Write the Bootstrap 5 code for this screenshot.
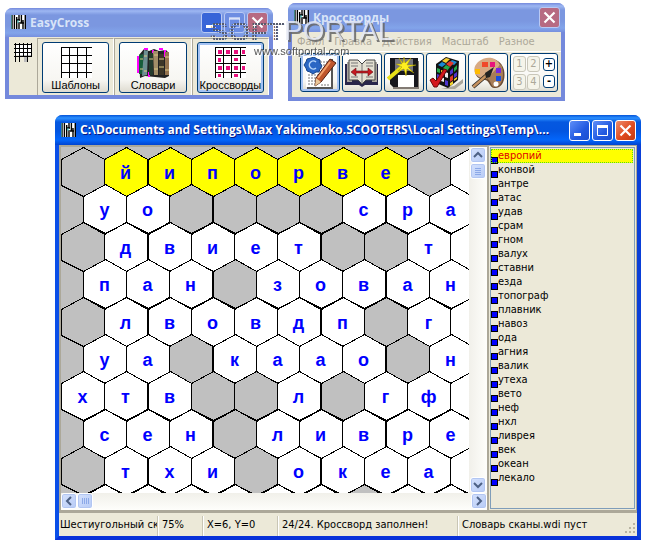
<!DOCTYPE html>
<html lang="ru">
<head>
<meta charset="utf-8">
<meta name="viewport" content="width=device-width, initial-scale=1">
<title>EasyCross</title>
<link href="https://cdn.jsdelivr.net/npm/bootstrap@5.3.0/dist/css/bootstrap.min.css" rel="stylesheet">
<style>
body{background:#fff;font:11px/14px "DejaVu Sans Condensed","DejaVu Sans",sans-serif;color:#000;min-height:100vh;overflow:hidden}
button{font:inherit;color:inherit;padding:0}
svg{display:block;flex:none}
.xp-window{position:absolute;background:#ece9d8;border:4px solid #7489dc;border-top:0;border-radius:8px 8px 0 0}
.win-easy{left:5px;top:8px;width:268px}
.win-tools{left:288px;top:3px;width:277px}
.win-main{left:55px;right:6px;top:115px;border-color:#0831d9;border-left-color:#0a4fe8;border-right-color:#0a3fd8}
.xp-title{height:29px;margin:0 -4px;padding:0 5px 0 6px;border-radius:7px 7px 0 0;color:#d8e4f8;font:bold 12px/18px "Open Sans","Noto Sans",sans-serif;background:linear-gradient(#7489dc 0,#9db7f2 3px,#7b97e0 7px,#7b97e0 18px,#82a4ea 25px,#768fde 100%)}
.win-main .xp-title{height:30px;color:#fff;text-shadow:1px 1px #0a1883;background:linear-gradient(#0453d8 0,#2b90ff 3px,#0558e0 7px,#0355e0 16px,#0366fb 25px,#0144d0 100%)}
.ctl-group{gap:2px}
.xp-ctl{width:21px;height:21px;border:1px solid #b9c9f4;border-radius:3px;background:#6d8de2}
.win-easy .xp-ctl.xp-min{background:#3764d8}
.win-main .xp-ctl{border-color:#fff;background:linear-gradient(135deg,#5f8ef8,#2159e0 60%,#1a4fd0)}
.xp-ctl.xp-close{background:#b76a82}
.win-main .xp-ctl.xp-close{background:linear-gradient(135deg,#ee8d6e,#e04b20 55%,#c23a12)}
.xp-btn{border:1px solid #003c74;border-radius:3px;background:linear-gradient(#fff,#f7f6f2 75%,#dedbd0)}
.xp-btn.is-default{box-shadow:inset 0 0 0 2px #a5c3f3}
.easy-body{padding-top:1px}
.easy-cell{flex:1 1 0;min-width:0;border-left:1px solid #aca899;border-top:1px solid #aca899;border-right:1px solid #fff;padding:3px 4px 2px}
.easy-cell .xp-btn{height:51px;overflow:hidden;font:11px/14px "Liberation Sans",sans-serif}
.menu-row{height:20px;padding:0 5px;gap:10px;color:#aca899;border-bottom:1px solid #fff}
.menu-row a{color:inherit;text-decoration:none}
.tool-row{padding:1px 3px 5px 8px;gap:2px}
.tool-row .tool{width:40px;height:39px;flex:none}
.zoom-pad{width:48px;height:39px;padding:0 2px;gap:2px}
.num-grid{grid-template-columns:14px 14px;row-gap:2px}
.pad-num{width:13px;height:16px;border:1px solid #c9c7ba;border-radius:3px;background:#f5f4ea;color:#aca899;line-height:13px}
.pad-sign{width:12px;height:13px;border:1px solid #003c74;border-radius:3px;background:#fff;font-weight:bold;line-height:10px}
.board-pane{border:1px solid #aca899;border-width:2px 1px 1px 2px;background:#ece9d8;min-width:0}
.board-view{height:346px;min-width:0;background:#c0c0c0;overflow:hidden}
.board-view text{font:bold 18px "Liberation Sans",sans-serif;fill:#00f;text-anchor:middle}
.track-v{width:18px;background:linear-gradient(90deg,#f1f0ea,#fefefb)}
.track-h{height:17px;background:linear-gradient(#f1f0ea,#fefefb)}
.sb{width:16px;height:16px;flex:none;border:1px solid #fff;border-radius:3px;background:linear-gradient(135deg,#d4e1fd,#b7cbf6);box-shadow:inset 0 0 0 1px #b2c6f2}
.word-pane{width:149px;border:1px solid #aca899}
.word-list{border:1px solid #7f9db9;padding:1px 1px 0 0;margin:1px}
.word-list li{height:14px;line-height:14px}
.word-list i{width:7px;height:7px;flex:none;border:1px solid #000;background:#00f;margin-bottom:-1px}
.word-list .picked{background:#ff0;color:#e00000;outline:1px dotted #5ce000;outline-offset:-1px}
.status{height:25px;padding-top:3px;border-top:2px solid #aca899;line-height:18px}
.status span{padding-left:4px;white-space:nowrap;overflow:hidden;border-right:1px solid #c9c6b5;box-shadow:1px 0 #fff}
.status .s1{width:99px;padding-left:1px}
.status .s2{width:45px}
.status .s3{width:75px}
.status .s4{width:180px}
.status .s5{border:0;box-shadow:none}
.stamp{position:absolute;left:204px;top:8px;pointer-events:none;font-family:"Liberation Sans",sans-serif}
.stamp .logo{filter:drop-shadow(2px 2px 0 #666)}
.stamp .site{filter:drop-shadow(1px 1px 0 #fff)}
</style>
<script src="https://cdn.jsdelivr.net/npm/bootstrap@5.3.0/dist/js/bootstrap.bundle.min.js"></script>
</head>
<body>
<svg width="0" height="0" class="position-absolute" aria-hidden="true">
<symbol id="app" viewBox="0 0 15 15"><path fill="#fff" d="M0 0h15v14H0z"/><path stroke="#000" stroke-width="1.4" d="M1 0v14M3.4 0v14M5.7 2v12M8 0v5M8 7v7M10.4 0v8M12 5v9M14.3 0v14M5 5h4M9 8h4"/><path stroke="#3bb" d="M0 0v14M7 5v3"/></symbol>
<symbol id="min" viewBox="0 0 19 19"><path fill="#fff" d="M4 12h7v3H4z"/></symbol>
<symbol id="max" viewBox="0 0 19 19"><path fill="none" stroke="currentColor" d="M4.500 5.500h10v9h-10z"/><path fill="currentColor" d="M4 4h11v3H4z"/></symbol>
<symbol id="cls" viewBox="0 0 19 19"><path stroke="#fff" stroke-width="2.200" d="M4.500 4.500l10 10M14.500 4.500l-10 10"/></symbol>
</svg>

<section class="xp-window win-easy">
<header class="xp-title d-flex align-items-center">
<svg width="15" height="15"><use href="#app"/></svg><span class="ms-1 flex-fill">EasyCross</span>
<div class="ctl-group d-flex text-white-50"><button class="xp-ctl xp-min" aria-label="Свернуть"><svg width="19" height="19"><use href="#min"/></svg></button><button class="xp-ctl" aria-label="Развернуть"><svg width="19" height="19"><use href="#max"/></svg></button><button class="xp-ctl xp-close" aria-label="Закрыть"><svg width="19" height="19"><use href="#cls"/></svg></button></div>
</header>
<div class="easy-body d-flex">
<svg class="ms-1 mt-1 me-1" width="20" height="20" viewBox="0 0 20 20" shape-rendering="crispEdges"><path d="M5 5h14v10h-4v5h-4v-5H7v5" fill="#bbb"/><path fill="#fff" d="M2 2h17v11H2z"/><path fill="none" stroke="#000" d="M1 2.500h18M1 6.500h18M1 10.500h18M1 14.500h18M2.500 1v19M6.500 1v19M10.500 1v14M14.500 1v19M18.500 1v13"/></svg>
<div class="easy-cell"><button class="xp-btn w-100 d-flex flex-column align-items-center"><svg class="mt-1" width="32" height="31" viewBox="0 0 32 31" shape-rendering="crispEdges"><path fill="#fff" d="M1 0h31v31H1z"/><path fill="none" stroke="#000" d="M1.500 0v31M9.500 0v31M17.500 0v31M26.500 0v31M1 .5h31M1 8.500h31M1 16.500h31M1 25.500h31"/></svg>Шаблоны</button></div>
<div class="easy-cell"><button class="xp-btn w-100 d-flex flex-column align-items-center"><svg class="mt-1" width="34" height="31" viewBox="0 0 34 31"><path fill="#222" d="M3 8l5-6 5 2 5-2 5 2 7-1 3 3v23l-4 2-20-2-5 2z"/><path fill="#f0f" d="M1 9h2v17H1zM8 1h4v2H8zM16 3h2v4h-2zM23 1h4v2h-4zM12 25h2v5h-2zM28 3h2v7h-2z"/><path fill="#175d3a" d="M3 8l4-1v20H3z"/><path fill="#6d8f92" d="M8 3l4 1-1 24-5 1z"/><path fill="#243b2d" d="M13 6h4v22h-4z"/><path fill="#a38e68" d="M17 4h5v24h-4z"/><path fill="#3d3627" d="M23 7h5v21h-5z"/><path fill="#94734e" d="M29 5h4v23h-4z"/><path stroke="#dbc985" d="M4 12h3M4 22h3M8 9h3M8 24h3M13 12h4M18 8h4M18 22h4M23 12h5M23 20h5M29 10h4M29 23h4"/></svg>Словари</button></div>
<div class="easy-cell"><button class="xp-btn is-default w-100 d-flex flex-column align-items-center"><svg class="mt-1" width="32" height="31" viewBox="0 0 32 31" shape-rendering="crispEdges"><path fill="#fff" d="M1 0h31v31H1z"/><path fill="none" stroke="#000" d="M1.500 0v31M9.500 0v31M17.500 0v31M26.500 0v31M1 .5h31M1 8.500h31M1 16.500h31M1 25.500h31"/><path fill="#e8107c" d="M4 3h4v4H4zM12 3h4v4h-4zM20 3h4v4h-4zM28 3h3v4h-3zM4 11h3v4H4zM20 11h4v3h-4zM4 19h4v4H4zM12 19h4v4h-4zM20 19h4v4h-4zM28 19h3v4h-3zM4 27h3v3H4zM20 27h4v3h-4z"/></svg>Кроссворды</button></div>
</div>
</section>

<section class="xp-window win-tools">
<header class="xp-title d-flex align-items-center">
<svg width="15" height="15"><use href="#app"/></svg><span class="ms-1 flex-fill">Кроссворды</span>
<button class="xp-ctl xp-close" aria-label="Закрыть"><svg width="19" height="19"><use href="#cls"/></svg></button>
</header>
<nav class="menu-row d-flex align-items-center"><a href="#">Файл</a><a href="#">Правка</a><a href="#">Действия</a><a href="#">Масштаб</a><a href="#">Разное</a></nav>
<div class="tool-row d-flex">
<button class="xp-btn is-default tool d-flex align-items-center justify-content-center" aria-label="Новый"><svg width="34" height="32" viewBox="0 0 34 32"><path fill="#555" d="M4 2h26v30H4z"/><path fill="#fff" d="M3 1h25v29H3z"/><path stroke="#777" stroke-dasharray="2 1" d="M17 5h9M17 8h6M17 11h4M5 18h12M5 21h8M5 24h7M5 27h9M18 28h8"/><path fill="#2b67c4" stroke="#174489" d="M8 1l3-1 3 2 3 1 0 3 2 3-2 3-1 3-3 0-3 2-3-2-3-1-1-3-2-3 2-3 1-3z"/><path d="M13 5a4 4 0 1 0 0 6" fill="none" stroke="#b7d6fa" stroke-width="1.500"/><path fill="#bf562d" stroke="#4f1d12" d="M27 2l6 4-15 19-6 4 1-8z"/><path stroke="#f3a26d" stroke-width="2" d="M27 5L15 21"/><path fill="#ebc798" d="M13 21l5 4-6 4z"/></svg></button>
<button class="xp-btn tool d-flex align-items-center justify-content-center" aria-label="Словарь"><svg width="34" height="28" viewBox="0 0 34 28"><path fill="#29264b" d="M0 5h33v21H20l-3 2-3-2H0z"/><path fill="#a8a49c" d="M2 3h5v20H2zM27 3h5v20h-5z"/><path fill="#e4e0d2" stroke="#444" d="M4 1h9l4 4 4-4h9v20h-9l-4 4-4-4H4z"/><path stroke="#777" d="M17 5v20M6 4h7M6 7h7M21 4h7M21 7h7M6 18h7M21 18h7"/><path fill="#c71920" stroke="#621018" stroke-width=".6" d="M6 13l5-4v3h12V9l5 4-5 4v-3H11v3z"/></svg></button>
<button class="xp-btn tool d-flex align-items-center justify-content-center" aria-label="Сохранить"><svg width="34" height="32" viewBox="0 0 34 32"><path fill="#827a73" d="M6 4h26v28H6z"/><path fill="#17171d" d="M3 1h28v29H6l-3-3z"/><path fill="#77757e" d="M8 2h18v12H8z"/><path fill="#fff" d="M11 18h16v12H11z"/><path stroke="#e7df17" stroke-width="4" d="M1 22L15 10"/><path fill="#ffef20" stroke="#a09500" stroke-width=".5" d="M17 0l1 6 6-5-4 7 9 0-8 2 6 6-7-4-1 7-2-7-6 2 4-4-6-3h6l-3-6 4 5z"/></svg></button>
<button class="xp-btn tool d-flex align-items-center justify-content-center" aria-label="Заполнить"><svg width="34" height="33" viewBox="0 0 34 33"><path fill="#aaa69b" d="M25 30l9-7v4l-8 6H12z"/><path fill="#111" d="M7 8L17 1l13 4-1 19-10 8L7 27z"/><path fill="#f5cc30" d="M13 5l4-3 4 1-4 4z"/><path fill="#1b88d4" d="M9 9l4-3 4 2-4 3zM23 4l5 2-3 3-5-2z"/><path fill="#e33a2b" d="M17 8l4-3 4 2-4 4zM21 21l3-2v5l-3 2z"/><path fill="#22a94a" d="M14 12l3-3 4 2-3 4zM8 12l3 1v4l-3-1zM25 12l3-3v4l-3 3z"/><path fill="#4e35d0" d="M21 15l3-3v5l-3 2zM8 18l3 1v5l-3-1zM25 18l3-2v4l-3 2zM16 24l3 1v5l-3-1z"/><path fill="#f4d52c" d="M12 14l3 1v5l-3-1zM21 27l3-2v3l-3 2zM25 23l3-2v2l-3 2z"/><path fill="#eee" d="M16 16l3 1v5l-3-1zM12 21l3 1v4l-3-1z"/><path fill="#d4181c" stroke="#6d0909" d="M1 24l3-2 3 3 8-12 3 1L8 31H5z"/></svg></button>
<button class="xp-btn tool d-flex align-items-center justify-content-center" aria-label="Цвета"><svg width="34" height="32" viewBox="0 0 34 32"><path fill="#6b4c34" d="M8 6C16-2 30 1 33 13c2 10-2 19-10 18-5-1-4-7-9-8C3 22 1 12 8 6z"/><path fill="#d8aa83" d="M7 5C15-2 26 0 29 8l-4 6-10 8C3 21 0 12 7 5z"/><path fill="#a77d58" d="M25 12l5-5c4 9 2 22-5 23-6 1-4-7-9-8z"/><path fill="#fb0" d="M4 12h5v5H4z"/><path fill="#f0492a" d="M11 5h6v5h-6z"/><path fill="#e8147c" d="M19 5h5v5h-5z"/><path fill="#7727e0" d="M25 11h5v5h-5z"/><path fill="#164fe0" d="M25 19h5v5h-5z"/><circle cx="25" cy="27" r="2.500" fill="#fff"/><path stroke="#222" stroke-width="4" d="M2 30L16 18"/><path stroke="#c6925f" stroke-width="2.500" d="M2 30L16 18"/><path fill="#222" d="M14 16l9-6-4 10-4 1z"/></svg></button>
<div class="xp-btn zoom-pad d-flex align-items-center">
<div class="num-grid d-grid"><button class="pad-num" disabled>1</button><button class="pad-num" disabled>2</button><button class="pad-num" disabled>3</button><button class="pad-num" disabled>4</button></div>
<div class="d-flex flex-column gap-1"><button class="pad-sign">+</button><button class="pad-sign">-</button></div>
</div>
</div>
</section>

<main class="xp-window win-main">
<header class="xp-title d-flex align-items-center">
<svg width="15" height="15"><use href="#app"/></svg><span class="ms-1 flex-fill text-truncate">C:\Documents and Settings\Max Yakimenko.SCOOTERS\Local Settings\Temp\...</span>
<div class="ctl-group d-flex ms-1 text-white"><button class="xp-ctl" aria-label="Свернуть"><svg width="19" height="19"><use href="#min"/></svg></button><button class="xp-ctl" aria-label="Развернуть"><svg width="19" height="19"><use href="#max"/></svg></button><button class="xp-ctl xp-close" aria-label="Закрыть"><svg width="19" height="19"><use href="#cls"/></svg></button></div>
</header>
<div class="d-flex">
<div class="board-pane flex-fill">
<div class="d-flex"><div class="board-view flex-fill"><svg id="board" width="900" height="346" shape-rendering="crispEdges"></svg></div>
<div class="track-v d-flex flex-column align-items-center flex-shrink-0"><button class="sb" aria-label="Вверх"><svg width="14" height="14"><path d="M3 9l4-4 4 4" fill="none" stroke="#4d6185" stroke-width="2"/></svg></button><button class="sb" aria-label="Прокрутка"><svg width="14" height="14"><path d="M4 4.500h6M4 6.500h6M4 8.500h6M4 10.500h6" stroke="#8ca9e8"/></svg></button><button class="sb mt-auto" aria-label="Вниз"><svg width="14" height="14"><path d="M3 5l4 4 4-4" fill="none" stroke="#4d6185" stroke-width="2"/></svg></button></div></div>
<div class="track-h d-flex"><button class="sb" aria-label="Влево"><svg width="14" height="14"><path d="M9 3L5 7l4 4" fill="none" stroke="#4d6185" stroke-width="2"/></svg></button><button class="sb" aria-label="Прокрутка"><svg width="14" height="14"><path d="M4.500 4v6M6.500 4v6M8.500 4v6M10.500 4v6" stroke="#8ca9e8"/></svg></button><button class="sb ms-auto" aria-label="Вправо"><svg width="14" height="14"><path d="M5 3l4 4-4 4" fill="none" stroke="#4d6185" stroke-width="2"/></svg></button></div>
</div>
<div class="word-pane flex-shrink-0 d-flex flex-column"><ul id="words" class="word-list list-unstyled flex-fill"></ul></div>
</div>
<footer class="status d-flex"><span class="s1">Шестиугольный скан</span><span class="s2">75%</span><span class="s3">X=6, Y=0</span><span class="s4">24/24. Кроссворд заполнен!</span><span class="s5 flex-fill">Словарь сканы.wdi пуст</span><svg class="mt-auto" width="13" height="14"><path fill="#b8b4a2" d="M9 1h2v2H9zM9 5h2v2H9zM5 5h2v2H5zM9 9h2v2H9zM5 9h2v2H5zM1 9h2v2H1z"/></svg></footer>
</main>

<svg class="stamp" width="200" height="56" aria-hidden="true">
<defs><pattern id="dots" width="3" height="3" patternUnits="userSpaceOnUse"><path fill="#555b6c" d="M0 0h2v2H0z"/><path fill="#d5d9e4" d="M2 1h1v1H2z"/></pattern></defs>
<text x="6" y="33" fill="url(#dots)" font-weight="bold" font-size="28">SOFT</text>
<text class="logo" x="80" y="32" fill="#e4e8f2" fill-opacity=".85" font-size="28">PORTAL</text>
<text class="site" x="50" y="47" fill="#555" font-size="11">www.softportal.com</text>
</svg>

<script>
// "." is a blocked cell, "_" an open cell without a letter
const rows = [".йипорве._", "уо....сра", ".двиет..т_", "пан.зован", ".лвовдп.г_", "уа.каао.н", "хтв..л.гф_", "сен.ливре", ".тхи.океа_", "______.__"];
let out = "";
rows.forEach((row, r) => {
  const y = Math.round(37.4 * r) + 0.5;
  [...row].forEach((ch, c) => {
    const x = Math.round(43.25 * c + (r % 2 ? 21.8 : 0)) + 0.5;
    const fill = ch === "." ? "#c0c0c0" : r === 0 && ch !== "_" ? "#ff0" : "#fff";
    out += `<path fill="${fill}" stroke="#000" d="M${x} ${y + 12}l22-12 21 12v26l-21 11-22-11z"/>`;
    if (ch !== "." && ch !== "_") out += `<text x="${x + 21}" y="${y + 31}">${ch}</text>`;
  });
});
document.getElementById("board").innerHTML = out;
const words = "европий конвой антре атас удав срам гном валух ставни езда топограф плавник навоз ода агния валик утеха вето неф нхл ливрея век океан лекало".split(" ");
document.getElementById("words").innerHTML = words.map((w, i) => `<li class="d-flex align-items-end${i ? "" : " picked"}"><i></i>${w}</li>`).join("");
</script>
</body>
</html>
